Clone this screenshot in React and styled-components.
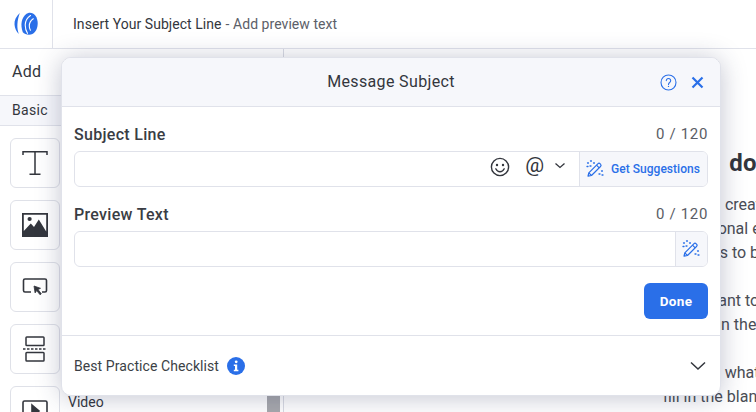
import React from 'react';
import styled, { createGlobalStyle } from 'styled-components';

const Global = createGlobalStyle`
  html, body { margin: 0; padding: 0; width: 756px; height: 412px; overflow: hidden; background: #fff; }
  * { box-sizing: border-box; }
  body { font-family: Roboto, "Liberation Sans", sans-serif; color: #33363d; }
`;
const BLUE = '#2a6fe8';
const Page = styled.div`position: relative; width: 756px; height: 412px; overflow: hidden; display: flex; flex-direction: column;`;
const TopBar = styled.header`height: 49px; flex: none; display: flex; border-bottom: 1px solid #e0e2ea;`;
const LogoCell = styled.div`width: 53px; border-right: 1px solid #e0e2ea; display: flex; align-items: center; justify-content: center; padding-right: 1px;`;
const Title = styled.div`padding-left: 20px; display: flex; align-items: center; font-size: 14px; letter-spacing: .05px; gap: 4px; color: #33363d; padding-bottom: 1px;`;
const Preview = styled.span`color: #5c6068;`;
const Body = styled.div`flex: 1; display: flex; min-height: 0;`;
const Sidebar = styled.aside`width: 284px; flex: none; border-right: 1px solid #d9dbe3; display: flex; flex-direction: column; position: relative; overflow: hidden;`;
const SideHead = styled.div`height: 46px; flex: none; padding: 13px 0 0 12px; font-size: 16px; letter-spacing: .3px; color: #33363d;`;
const SideTab = styled.div`height: 31px; flex: none; padding: 6px 0 0 12px; font-size: 14px; letter-spacing: .3px; background: #f6f7fb; border-top: 1px solid #e0e2ea; border-bottom: 1px solid #e0e2ea;`;
const List = styled.div`padding: 12px 0 0 10px; display: flex; flex-direction: column; gap: 12px;`;
const Row = styled.div`display: flex; align-items: flex-start; gap: 8px; height: 50px; font-size: 14px; line-height: 32px; flex: none;`;
const Tile = styled.div`width: 50px; height: 50px; flex: none; border: 1px solid #dfe1e8; border-radius: 6px; background: #fff; display: flex; align-items: center; justify-content: center;`;
const Scroll = styled.div`position: absolute; left: 267px; top: 346px; width: 13px; height: 30px; background: #a8a9ad;`;
const Main = styled.main`flex: 1; padding: 100px 0 0 379px; min-width: 0; overflow: hidden; white-space: nowrap;`;
const Heading = styled.div`font-size: 24px; font-weight: 700; line-height: 28px; word-spacing: 4px; color: #33363d; margin-bottom: 16px; padding-left: ${p => p.$x}px;`;
const Para = styled.p`margin: 0 0 24px; font-size: 16px; line-height: 24px; color: #4a4d55;`;
const Line = styled.div`padding-left: ${p => p.$x || 0}px; margin-left: ${p => p.$back || 0}px;`;

const Modal = styled.section`position: absolute; left: 61px; top: 57px; width: 660px; height: 339px; background: #fff; border: 1px solid #e0e2ea; border-radius: 10px; box-shadow: 0 2px 26px rgba(40,48,90,.28); display: flex; flex-direction: column; overflow: hidden;`;
const ModalHead = styled.div`position: relative; height: 49px; flex: none; background: #f6f7fb; border-bottom: 1px solid #e0e2ea; display: flex; align-items: center; justify-content: center; font-size: 16px; letter-spacing: .35px; color: #33363d; padding-bottom: 2px;`;
const HeadIcons = styled.div`position: absolute; right: 16px; top: 16px; display: flex; align-items: center; gap: 14px;`;
const ModalBody = styled.div`flex: 1; padding: 0 12px; display: flex; flex-direction: column;`;
const FieldHead = styled.div`display: flex; justify-content: space-between; align-items: center; height: 20px; margin-bottom: 6px; padding-bottom: 2px;`;
const Label = styled.label`font-size: 16px; font-weight: 500; letter-spacing: .3px; color: #3a3d44;`;
const Count = styled.span`font-size: 15px; letter-spacing: .65px; color: #5a5d65;`;
const Field = styled.div`margin-top: ${p => p.$top}px;`;
const InputBox = styled.div`height: 36px; border: 1px solid #e0e2ea; border-radius: 6px; display: flex; align-items: center; justify-content: flex-end; overflow: hidden;`;
const Tools = styled.div`display: flex; align-items: center; padding: 0 13px 5px 0; color: #33363d;`;
const At = styled.span`font-size: 21px; line-height: 20px; margin: 0 10px 4px 15px; color: #33363d;`;
const Caret = styled.svg`margin-bottom: 1px;`;
const Suggest = styled.button`height: 100%; border: 0; border-left: 1px solid #e0e2ea; background: #f6f7fb; display: flex; align-items: center; justify-content: center; gap: 7px; padding: 0 1px 0 0; width: ${p => p.$w}px; color: ${BLUE}; font: 500 12px Roboto, sans-serif; letter-spacing: .03px;`;
const Actions = styled.div`display: flex; justify-content: flex-end; margin-top: 16px;`;
const Done = styled.button`width: 64px; height: 36px; background: ${BLUE}; color: #fff; border: 0; border-radius: 6px; font: 700 13.5px Roboto, sans-serif; letter-spacing: .3px;`;
const Footer = styled.div`height: 60px; flex: none; border-top: 1px solid #e0e2ea; display: flex; align-items: center; padding: 0 14px 0 12px; font-size: 14px; letter-spacing: .08px; color: #3c3f46; gap: 8px;`;
const Chevron = styled.svg`margin-left: auto;`;

const Logo = () => (
  <svg width="24" height="24" viewBox="0 0 24 24">
    <path d="M5.800 1C2 4.500 .2 8.500.5 12.500c.3 3.800 1.800 7 4.300 9.500-1.100-3.300-1.600-6.500-1.400-9.800C3.600 8.200 4.500 4.500 5.800 1Z" fill={BLUE}/>
    <path d="M15 .8c5-.6 8.700 4 8.700 10.700 0 6.500-3.700 11.300-8.700 11.300-2.800 0-4.800-.9-6.200-2.500C7.500 16.500 7 13 7.800 9.300 8.800 5 11.500 1.600 15 .8Z" fill={BLUE}/>
    <path d="M16.500 3.500C13 5.800 11.300 9.200 11.200 13c0 3 .7 5.800 2.300 8.300M19.300 6.800c-2.600 1.700-4 4.300-4 7.200 0 1.600.4 3 1.100 4.200" stroke="#fff" strokeWidth="1.100" fill="none" strokeLinecap="round"/>
  </svg>
);
const Wand = ({ s = 18 }) => (
  <svg width={s} height={s} viewBox="0 0 18 18" fill="none" stroke={BLUE} strokeWidth="1.200" strokeLinejoin="round">
    <path d="M2 16.200l.8-3.400L11.800 3.800a1.700 1.700 0 0 1 2.400 0l.3.3a1.700 1.700 0 0 1 0 2.400l-9 9z"/>
    <path d="M10.500 5.200l2.700 2.700M2.800 12.800l2.700 2.700" />
    <path d="M1.500 3h1M4.500 1h1M7.500 3h1M1 6.500h1M4 6h1M15.500 11h1M13 14h1M16 15h1" strokeWidth="1.300" strokeLinecap="round"/>
  </svg>
);
const Smile = () => (
  <svg width="20" height="20" viewBox="0 0 20 20" fill="none" stroke="#33363d" strokeWidth="1.400">
    <circle cx="10" cy="10" r="8.600"/>
    <circle cx="7" cy="8" r="1.200" fill="#33363d" stroke="none"/>
    <circle cx="13" cy="8" r="1.200" fill="#33363d" stroke="none"/>
    <path d="M5.800 11.800c1 2 2.500 3 4.200 3s3.200-1 4.200-3" strokeLinecap="round"/>
  </svg>
);

export default function App() {
  return (
    <Page>
      <Global />
      <TopBar>
        <LogoCell><Logo /></LogoCell>
        <Title><span>Insert Your Subject Line</span><Preview>- Add preview text</Preview></Title>
      </TopBar>
      <Body>
        <Sidebar>
          <SideHead>Add</SideHead>
          <SideTab>Basic</SideTab>
          <List>
            <Row><Tile>
              <svg width="28" height="28" viewBox="0 0 28 28" fill="none" stroke="#33363d" strokeWidth="1.500"><path d="M2 6V2.700h24V6M14 2.700v22.600M8.500 25.300h11"/></svg>
            </Tile>Text</Row>
            <Row><Tile>
              <svg width="26" height="24" viewBox="0 0 26 24"><path d="M0 0h26v24H0z" fill="#33363d"/><path d="M1.800 1.800h22.400v16.700L16.800 6.500 12 14l-3.200-3.500-7 7.500z" fill="#fff"/><circle cx="7.600" cy="6" r="2.100" fill="#33363d"/></svg>
            </Tile>Image</Row>
            <Row><Tile>
              <svg width="28" height="24" viewBox="0 0 28 24" fill="none" stroke="#33363d" strokeWidth="1.600"><path d="M10 17H4a1.500 1.500 0 0 1-1.500-1.500v-10A1.500 1.500 0 0 1 4 4h20a1.500 1.500 0 0 1 1.500 1.500v10A1.500 1.500 0 0 1 24 17h-3"/><path d="M13 11l6.500 2.300-2.500 1.200 3.300 4.300-1.200 1-3.400-4.200-1.600 2.300z" fill="#33363d" strokeWidth=".8"/></svg>
            </Tile>Button</Row>
            <Row><Tile>
              <svg width="26" height="28" viewBox="0 0 26 28" fill="none" stroke="#33363d" strokeWidth="1.500"><rect x="4" y="2" width="18" height="8.500" rx=".8"/><rect x="4" y="17.500" width="18" height="8.500" rx=".8"/><path d="M1 14h24" strokeDasharray="2.500 1.500"/></svg>
            </Tile>Divider</Row>
            <Row><Tile>
              <svg width="26" height="22" viewBox="0 0 26 22" fill="none" stroke="#33363d" strokeWidth="1.600"><rect x="1" y="1" width="24" height="20" rx="1.500"/><path d="M10 5l7 6-7 6z" fill="#33363d"/></svg>
            </Tile>Video</Row>
          </List>
          <Scroll />
        </Sidebar>
        <Main>
          <Heading $x={1}>What do</Heading>
          <Para>
            <Line $x={1}>You can create a</Line>
            <Line $back={-3}>professional email</Line>
            <Line $x={9}>in steps to begin</Line>
          </Para>
          <Para>
            <Line>If you want to</Line>
            <Line $x={11}>begin in the editor</Line>
          </Para>
          <Para>
            <Line $x={9}>Decide what to say</Line>
            <Line>fill in the blanks</Line>
          </Para>
        </Main>
      </Body>
      <Modal>
        <ModalHead>
          Message Subject
          <HeadIcons>
            <svg width="17" height="17" viewBox="0 0 17 17" fill="none" stroke={BLUE} strokeWidth="1.100"><circle cx="8.500" cy="8.500" r="7.500"/><path d="M6.300 6.600a2.200 2.200 0 1 1 3.400 1.900c-.8.500-1.200 1-1.200 1.900" strokeLinecap="round"/><circle cx="8.500" cy="12.400" r=".7" fill={BLUE} stroke="none"/></svg>
            <svg width="13" height="13" viewBox="0 0 13 13" fill="none" stroke={BLUE} strokeWidth="2.200"><path d="M1.500 1.500l10 10M11.500 1.500l-10 10"/></svg>
          </HeadIcons>
        </ModalHead>
        <ModalBody>
          <Field $top={18}>
            <FieldHead><Label>Subject Line</Label><Count>0 / 120</Count></FieldHead>
            <InputBox>
              <Tools>
                <Smile />
                <At>@</At>
                <Caret width="12" height="8" viewBox="0 0 12 8" fill="none" stroke="#33363d" strokeWidth="1.300"><path d="M1.500 1.500L6 5.500l4.500-4"/></Caret>
              </Tools>
              <Suggest $w={128}><Wand />Get Suggestions</Suggest>
            </InputBox>
          </Field>
          <Field $top={18}>
            <FieldHead><Label>Preview Text</Label><Count>0 / 120</Count></FieldHead>
            <InputBox>
              <Suggest $w={32}><Wand /></Suggest>
            </InputBox>
          </Field>
          <Actions><Done>Done</Done></Actions>
        </ModalBody>
        <Footer>
          Best Practice Checklist
          <svg width="18" height="18" viewBox="0 0 18 18"><circle cx="9" cy="9" r="9" fill={BLUE}/><circle cx="9.200" cy="4.800" r="1.400" fill="#fff"/><path d="M6.800 7.500h3.400v5.300h1.200v1.400H6.800v-1.400H8V8.900H6.800z" fill="#fff"/></svg>
          <Chevron width="16" height="10" viewBox="0 0 16 10" fill="none" stroke="#33363d" strokeWidth="1.500"><path d="M1 1.500L8 8l7-6.500"/></Chevron>
        </Footer>
      </Modal>
    </Page>
  );
}
